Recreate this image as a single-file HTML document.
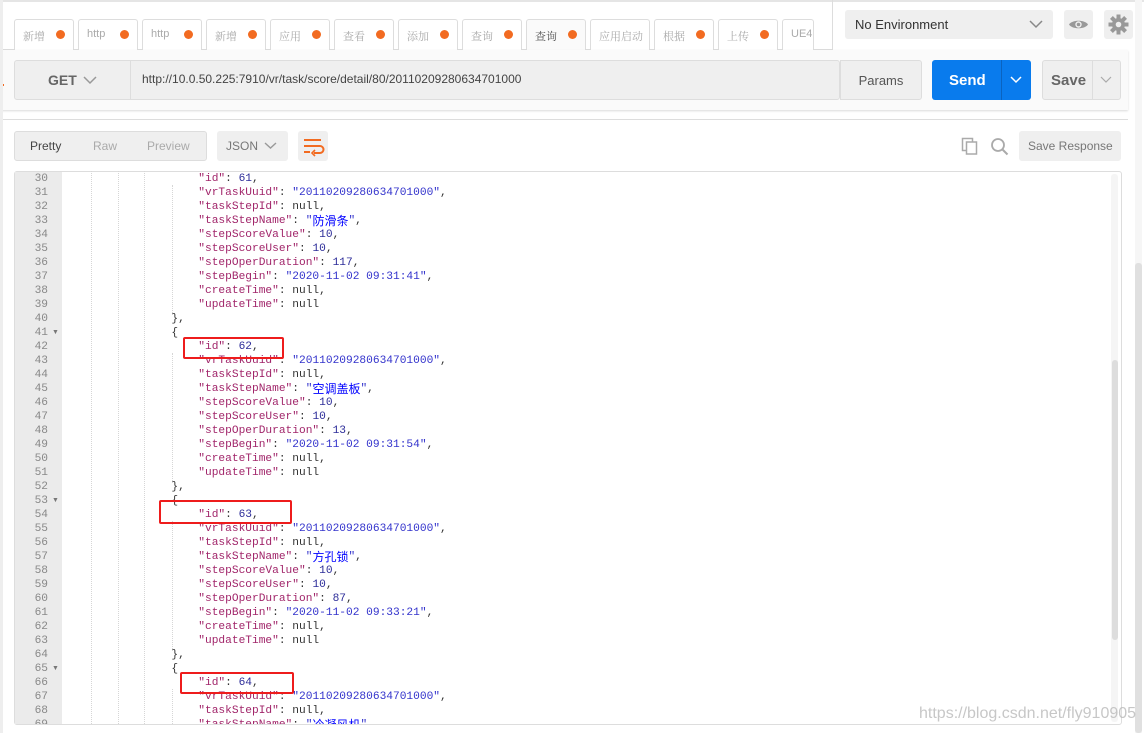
<!DOCTYPE html>
<html><head><meta charset="utf-8">
<style>
*{margin:0;padding:0;box-sizing:border-box}
body{width:1144px;height:733px;overflow:hidden;background:#fff;font-family:"Liberation Sans","Noto Sans CJK SC",sans-serif;position:relative;color:#333}
.a{position:absolute}
.tab{position:absolute;top:19px;width:60px;height:31px;border:1px solid #ddd;border-bottom:none;border-radius:3px 3px 0 0;background:#fff;font-family:"Noto Serif CJK SC","Liberation Serif",serif;font-size:11px;color:#aaa;padding:8px 0 0 8px}
.tab .d{position:absolute;right:8px;top:10px;width:9px;height:9px;border-radius:50%;background:#f26b21}
.btn{position:absolute;background:#efefef;border-radius:3px}
.code{position:absolute;left:64px;font-family:"Liberation Mono","Noto Sans CJK SC",monospace;font-size:11.2px;color:#333}
.code div{height:14px;line-height:14px;white-space:pre;overflow:visible}
.ln{position:absolute;left:15px;width:47px;font-family:"Liberation Mono",monospace;font-size:11.2px;line-height:14px;color:#888;text-align:right;padding-right:14px}
.k{color:#a1256a}.s{color:#3333cc}.n{color:#2d2d99}
.c{color:#0000ff;font-family:"Noto Sans CJK SC",sans-serif;font-size:12px;display:inline-block;height:14px;line-height:14px;vertical-align:top}
.g{position:absolute;top:171px;height:553px;border-left:1px dotted #d6d6d6}
.rb{position:absolute;border:2px solid #ee1c1c;border-radius:2px}
</style></head><body>
<div class="a" style="left:0;top:0;width:1144px;height:2px;background:#e5e5e5"></div>
<div class="a" style="left:0;top:49px;width:832px;height:1px;background:#ddd"></div>
<div class="a" style="left:832px;top:0;width:1px;height:50px;background:#ddd"></div>
<div class="tab" style="left:14px">新增<span class="d"></span></div>
<div class="tab" style="left:78px;font-family:'Liberation Sans',sans-serif">http<span class="d"></span></div>
<div class="tab" style="left:142px;font-family:'Liberation Sans',sans-serif">http<span class="d"></span></div>
<div class="tab" style="left:206px">新增<span class="d"></span></div>
<div class="tab" style="left:270px">应用<span class="d"></span></div>
<div class="tab" style="left:334px">查看<span class="d"></span></div>
<div class="tab" style="left:398px">添加<span class="d"></span></div>
<div class="tab" style="left:462px">查询<span class="d"></span></div>
<div class="tab" style="left:526px;background:#fafafa;height:32px;color:#555">查询<span class="d"></span></div>
<div class="tab" style="left:590px">应用启动</div>
<div class="tab" style="left:654px">根据<span class="d"></span></div>
<div class="tab" style="left:718px">上传<span class="d"></span></div>
<div class="tab" style="left:782px;width:32px;font-family:'Liberation Sans',sans-serif">UE4</div>
<div class="btn" style="left:845px;top:10px;width:208px;height:29px;font-size:13px;color:#333;padding:7px 10px">No Environment
<svg class="a" style="right:10px;top:10px" width="14" height="9"><path d="M1 1l6 6 6-6" stroke="#888" stroke-width="1.5" fill="none"/></svg></div>
<div class="btn" style="left:1064px;top:10px;width:29px;height:29px"><svg width="29" height="29"><path d="M5 14.5c3-5 16-5 19 0c-3 5-16 5-19 0z" fill="#999"/><circle cx="14.5" cy="14.5" r="3.2" fill="#efefef"/><circle cx="14.5" cy="14.5" r="1.8" fill="#999"/></svg></div>
<div class="btn" style="left:1104px;top:10px;width:29px;height:29px"><svg width="29" height="29"><g fill="#999" transform="translate(14.5 14.5)"><circle r="6.5"/><rect x="-2" y="-10" width="4" height="20"/><rect x="-2" y="-10" width="4" height="20" transform="rotate(45)"/><rect x="-2" y="-10" width="4" height="20" transform="rotate(90)"/><rect x="-2" y="-10" width="4" height="20" transform="rotate(135)"/></g><circle cx="14.5" cy="14.5" r="2.8" fill="#efefef"/></svg></div>
<div class="a" style="left:0;top:50px;width:1128px;height:60px;background:#fafafa;box-shadow:0 1px 2px rgba(0,0,0,.15)"></div>
<div class="a" style="left:0;top:84px;width:4px;height:2px;background:#f26b21"></div>
<div class="a" style="left:14px;top:60px;width:826px;height:40px;background:#efefef;border:1px solid #ddd;border-radius:3px"></div>
<div class="a" style="left:130px;top:60px;width:1px;height:40px;background:#ddd"></div>
<div class="a" style="left:48px;top:72px;font-size:14px;font-weight:bold;color:#666">GET</div>
<svg class="a" style="left:83px;top:76px" width="14" height="9"><path d="M1 1l6 6 6-6" stroke="#999" stroke-width="1.5" fill="none"/></svg>
<div class="a" style="left:142px;top:72px;font-size:12px;color:#444">http://10.0.50.225:7910/vr/task/score/detail/80/20110209280634701000</div>
<div class="a" style="left:840px;top:60px;width:82px;height:40px;background:#efefef;border:1px solid #ddd;border-radius:0 3px 3px 0;font-size:13px;color:#555;text-align:center;padding-top:12px">Params</div>
<div class="a" style="left:932px;top:60px;width:99px;height:40px;background:#097bed;border-radius:3px"></div>
<div class="a" style="left:1001px;top:60px;width:1px;height:40px;background:#0a63c0"></div>
<div class="a" style="left:949px;top:72px;font-size:15px;font-weight:bold;color:#fff">Send</div>
<svg class="a" style="left:1010px;top:76px" width="12" height="8"><path d="M1 1l5 5 5-5" stroke="#fff" stroke-width="1.5" fill="none"/></svg>
<div class="a" style="left:1042px;top:60px;width:79px;height:40px;background:#efefef;border:1px solid #ddd;border-radius:3px"></div>
<div class="a" style="left:1092px;top:60px;width:1px;height:40px;background:#ddd"></div>
<div class="a" style="left:1051px;top:72px;font-size:15px;font-weight:bold;color:#666">Save</div>
<svg class="a" style="left:1100px;top:76px" width="12" height="8"><path d="M1 1l5 5 5-5" stroke="#aaa" stroke-width="1.2" fill="none"/></svg>
<div class="a" style="left:0;top:119px;width:1128px;height:1px;background:#ddd"></div>
<div class="a" style="left:14px;top:131px;width:193px;height:30px;background:#efefef;border:1px solid #ddd;border-radius:3px"></div>
<div class="a" style="left:30px;top:139px;font-size:12px;color:#444">Pretty</div>
<div class="a" style="left:93px;top:139px;font-size:12px;color:#aaa">Raw</div>
<div class="a" style="left:147px;top:139px;font-size:12px;color:#aaa">Preview</div>
<div class="btn" style="left:217px;top:131px;width:71px;height:30px;font-size:12px;color:#777;padding:8px 9px">JSON</div>
<svg class="a" style="left:264px;top:142px" width="13" height="8"><path d="M1 1l5.5 5 5.5-5" stroke="#999" stroke-width="1.4" fill="none"/></svg>
<div class="btn" style="left:298px;top:131px;width:30px;height:30px"><svg width="30" height="30"><path d="M6 9h17M6 15h16a3.5 3.5 0 0 1 0 7h-6M6 21h6" stroke="#f26b21" stroke-width="2" fill="none"/><path d="M17 19l-3 3 3 3" stroke="#f26b21" stroke-width="1.6" fill="none"/></svg></div>
<svg class="a" style="left:961px;top:137px" width="18" height="18"><rect x="1.5" y="1.5" width="10" height="12" fill="none" stroke="#aaa" stroke-width="1.5"/><rect x="5.5" y="5" width="10" height="12" fill="#fff" stroke="#aaa" stroke-width="1.5"/></svg>
<svg class="a" style="left:990px;top:137px" width="20" height="20"><circle cx="8" cy="8" r="6" fill="none" stroke="#aaa" stroke-width="1.8"/><path d="M12.5 12.5l5 5" stroke="#aaa" stroke-width="2"/></svg>
<div class="btn" style="left:1019px;top:131px;width:102px;height:30px;font-size:12px;color:#777;padding:8px 0 0 9px">Save Response</div>
<div class="a" style="left:14px;top:171px;width:1108px;height:554px;border:1px solid #ddd;border-radius:3px"></div>
<div class="a" style="left:15px;top:172px;width:47px;height:552px;background:#ebebeb"></div>
<div class="g" style="left:91px"></div><div class="g" style="left:118px"></div><div class="g" style="left:144px"></div><div class="g" style="left:172px;top:185px;height:130px"></div><div class="g" style="left:172px;top:353px;height:130px"></div><div class="g" style="left:172px;top:521px;height:130px"></div><div class="g" style="left:172px;top:689px;height:35px"></div>
<div class="a" style="left:1111px;top:174px;width:7px;height:548px;background:#f5f5f5;border-radius:3px"></div>
<div class="a" style="left:1112px;top:360px;width:6px;height:280px;background:#ddd;border-radius:3px"></div>
<div class="a" style="left:1135px;top:0;width:7px;height:733px;background:#f6f6f6"></div>
<div class="a" style="left:1135px;top:263px;width:7px;height:470px;background:#e0e0e0;border-radius:3px"></div>
<div class="a" style="left:0;top:0;width:3px;height:733px;background:#eee"></div>
<div class="a" style="left:0;top:171px;width:1110px;height:553px;overflow:hidden">
<div class="ln" style="top:1px">30<br>31<br>32<br>33<br>34<br>35<br>36<br>37<br>38<br>39<br>40<br>41<br>42<br>43<br>44<br>45<br>46<br>47<br>48<br>49<br>50<br>51<br>52<br>53<br>54<br>55<br>56<br>57<br>58<br>59<br>60<br>61<br>62<br>63<br>64<br>65<br>66<br>67<br>68<br>69</div>
<div class="a" style="left:52px;top:158px;font-size:7px;color:#777">▼</div>
<div class="a" style="left:52px;top:326px;font-size:7px;color:#777">▼</div>
<div class="a" style="left:52px;top:494px;font-size:7px;color:#777">▼</div>
<div class="code" style="top:1px">
<div>                    <span class="k">"id"</span>: <span class="n">61</span>,</div>
<div>                    <span class="k">"vrTaskUuid"</span>: <span class="s">"20110209280634701000"</span>,</div>
<div>                    <span class="k">"taskStepId"</span>: null,</div>
<div>                    <span class="k">"taskStepName"</span>: <span class="s">"<span class="c">防滑条</span>"</span>,</div>
<div>                    <span class="k">"stepScoreValue"</span>: <span class="n">10</span>,</div>
<div>                    <span class="k">"stepScoreUser"</span>: <span class="n">10</span>,</div>
<div>                    <span class="k">"stepOperDuration"</span>: <span class="n">117</span>,</div>
<div>                    <span class="k">"stepBegin"</span>: <span class="s">"2020-11-02 09:31:41"</span>,</div>
<div>                    <span class="k">"createTime"</span>: null,</div>
<div>                    <span class="k">"updateTime"</span>: null</div>
<div>                },</div>
<div>                {</div>
<div>                    <span class="k">"id"</span>: <span class="n">62</span>,</div>
<div>                    <span class="k">"vrTaskUuid"</span>: <span class="s">"20110209280634701000"</span>,</div>
<div>                    <span class="k">"taskStepId"</span>: null,</div>
<div>                    <span class="k">"taskStepName"</span>: <span class="s">"<span class="c">空调盖板</span>"</span>,</div>
<div>                    <span class="k">"stepScoreValue"</span>: <span class="n">10</span>,</div>
<div>                    <span class="k">"stepScoreUser"</span>: <span class="n">10</span>,</div>
<div>                    <span class="k">"stepOperDuration"</span>: <span class="n">13</span>,</div>
<div>                    <span class="k">"stepBegin"</span>: <span class="s">"2020-11-02 09:31:54"</span>,</div>
<div>                    <span class="k">"createTime"</span>: null,</div>
<div>                    <span class="k">"updateTime"</span>: null</div>
<div>                },</div>
<div>                {</div>
<div>                    <span class="k">"id"</span>: <span class="n">63</span>,</div>
<div>                    <span class="k">"vrTaskUuid"</span>: <span class="s">"20110209280634701000"</span>,</div>
<div>                    <span class="k">"taskStepId"</span>: null,</div>
<div>                    <span class="k">"taskStepName"</span>: <span class="s">"<span class="c">方孔锁</span>"</span>,</div>
<div>                    <span class="k">"stepScoreValue"</span>: <span class="n">10</span>,</div>
<div>                    <span class="k">"stepScoreUser"</span>: <span class="n">10</span>,</div>
<div>                    <span class="k">"stepOperDuration"</span>: <span class="n">87</span>,</div>
<div>                    <span class="k">"stepBegin"</span>: <span class="s">"2020-11-02 09:33:21"</span>,</div>
<div>                    <span class="k">"createTime"</span>: null,</div>
<div>                    <span class="k">"updateTime"</span>: null</div>
<div>                },</div>
<div>                {</div>
<div>                    <span class="k">"id"</span>: <span class="n">64</span>,</div>
<div>                    <span class="k">"vrTaskUuid"</span>: <span class="s">"20110209280634701000"</span>,</div>
<div>                    <span class="k">"taskStepId"</span>: null,</div>
<div>                    <span class="k">"taskStepName"</span>: <span class="s">"<span class="c">冷凝风机</span>"</span>,</div>
</div>
</div>
<div class="rb" style="left:183px;top:337px;width:101px;height:22px"></div>
<div class="rb" style="left:159px;top:500px;width:133px;height:24px"></div>
<div class="rb" style="left:180px;top:672px;width:114px;height:22px"></div>
<div class="a" style="left:919px;top:705px;font-size:16px;color:rgba(180,180,180,.75);white-space:nowrap">https://blog.csdn.net/fly910905</div>
</body></html>
